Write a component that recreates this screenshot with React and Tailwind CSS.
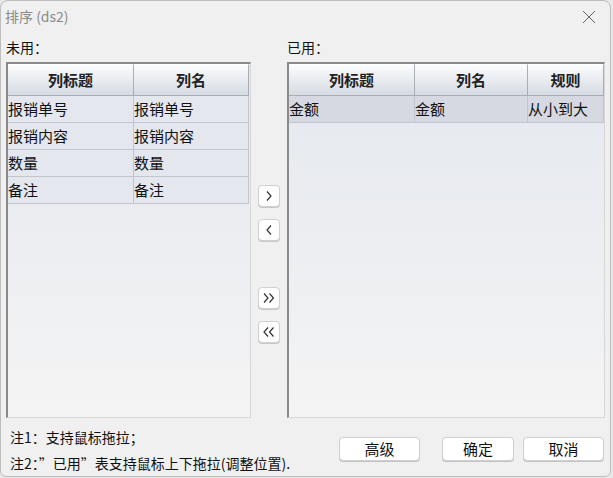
const font = { fontFamily: '"Noto Sans CJK SC", "Liberation Sans", sans-serif' };

function Table({ cols, rows, selected }) {
  const tpl = cols.map((c) => c.w + 'px').join(' ');
  return (
    <div className="h-full border-l-2 border-t-2 border-[#8a8a8a] border-r border-b border-r-[#d6d6d6] border-b-[#d6d6d6] bg-gradient-to-b from-[#e4e8ef] to-[#f4f4f4] overflow-hidden">
      <div className="grid" style={{ gridTemplateColumns: tpl }}>
        {cols.map((c, i) => (
          <div
            key={i}
            className="h-[32px] flex items-center justify-center font-bold text-[15px] text-[#222] bg-gradient-to-b from-[#fbfcfd] to-[#d6dbe3] border-r border-b border-[#a9aeb6] border-t border-t-white"
          >
            {c.t}
          </div>
        ))}
      </div>
      {rows.map((r, ri) => (
        <div key={ri} className="grid" style={{ gridTemplateColumns: tpl }}>
          {r.map((v, ci) => (
            <div
              key={ci}
              className={
                'h-[27px] flex items-center text-[15px] text-[#111] border-r border-b border-[#c2c6cc] ' +
                (selected ? 'bg-[#d6d9e1]' : 'bg-[#e4e7ee]')
              }
            >
              {v}
            </div>
          ))}
        </div>
      ))}
    </div>
  );
}

function SmallBtn({ children }) {
  return (
    <button className="w-[22px] h-[22px] rounded-[4px] border border-[#d0d0d0] bg-white flex items-center justify-center text-[#333] shadow-[0_1px_0_#c8c8c8]">
      {children}
    </button>
  );
}

function Chev({ dir, double }) {
  const one = (x) =>
    dir === 'r' ? `M${x} 3.5 L${x + 4} 8 L${x} 12.5` : `M${x + 4} 3.5 L${x} 8 L${x + 4} 12.5`;
  return (
    <svg width="14" height="16" viewBox="0 0 14 16" fill="none" stroke="#333" strokeWidth="1.2">
      {double ? (
        <>
          <path d={one(2)} />
          <path d={one(7.5)} />
        </>
      ) : (
        <path d={one(5)} />
      )}
    </svg>
  );
}

function BigBtn({ children, w }) {
  return (
    <button
      className="h-[24px] rounded-[4px] border border-[#cfcfcf] bg-white text-[15px] text-[#111] flex items-center justify-center shadow-[0_1px_0_#c4c4c4]"
      style={{ width: w }}
    >
      {children}
    </button>
  );
}

export default function App() {
  return (
    <div className="w-[613px] h-[478px] bg-[#e8e8e8]" style={font}>
      <div className="w-[611px] h-[477px] rounded-t-[8px] rounded-b-[6px] border border-[#bdbdbd] bg-[#f0f0f0] flex flex-col overflow-hidden">
        <div className="h-[33px] flex items-center justify-between pl-[4px] pr-[14px]">
          <span className="text-[14px] text-[#8a8a8a]">排序 (ds2)</span>
          <svg width="14" height="14" viewBox="0 0 14 14" stroke="#666" strokeWidth="1">
            <path d="M1 1 L13 13 M13 1 L1 13" />
          </svg>
        </div>
        <div className="flex px-[5px] gap-0">
          <div className="flex flex-col w-[246px]">
            <div className="h-[30px] flex items-center text-[14px] text-[#111]">未用：</div>
            <div className="h-[356px]">
              <Table
                cols={[{ t: '列标题', w: 126 }, { t: '列名', w: 115 }]}
                rows={[
                  ['报销单号', '报销单号'],
                  ['报销内容', '报销内容'],
                  ['数量', '数量'],
                  ['备注', '备注'],
                ]}
              />
            </div>
          </div>
          <div className="w-[36px] flex flex-col items-center pt-[153px]">
            <div className="flex flex-col gap-[12px]">
              <SmallBtn><Chev dir="r" /></SmallBtn>
              <SmallBtn><Chev dir="l" /></SmallBtn>
            </div>
            <div className="flex flex-col gap-[12px] mt-[46px]">
              <SmallBtn><Chev dir="r" double /></SmallBtn>
              <SmallBtn><Chev dir="l" double /></SmallBtn>
            </div>
          </div>
          <div className="flex flex-col w-[318px]">
            <div className="h-[30px] flex items-center text-[14px] text-[#111]">已用：</div>
            <div className="h-[356px]">
              <Table
                selected
                cols={[{ t: '列标题', w: 126 }, { t: '列名', w: 113 }, { t: '规则', w: 76 }]}
                rows={[['金额', '金额', '从小到大']]}
              />
            </div>
          </div>
        </div>
        <div className="flex items-center justify-between px-[9px] pr-[6px] mt-[6px]">
          <div className="flex flex-col text-[14px] text-[#111] leading-[26px]">
            <span>注1：支持鼠标拖拉；</span>
            <span>注2：”已用”表支持鼠标上下拖拉(调整位置).</span>
          </div>
          <div className="flex gap-[22px] -mt-[2px]">
            <BigBtn w={81}>高级</BigBtn>
            <div className="flex gap-[9px]">
              <BigBtn w={72}>确定</BigBtn>
              <BigBtn w={81}>取消</BigBtn>
            </div>
          </div>
        </div>
      </div>
    </div>
  );
}
